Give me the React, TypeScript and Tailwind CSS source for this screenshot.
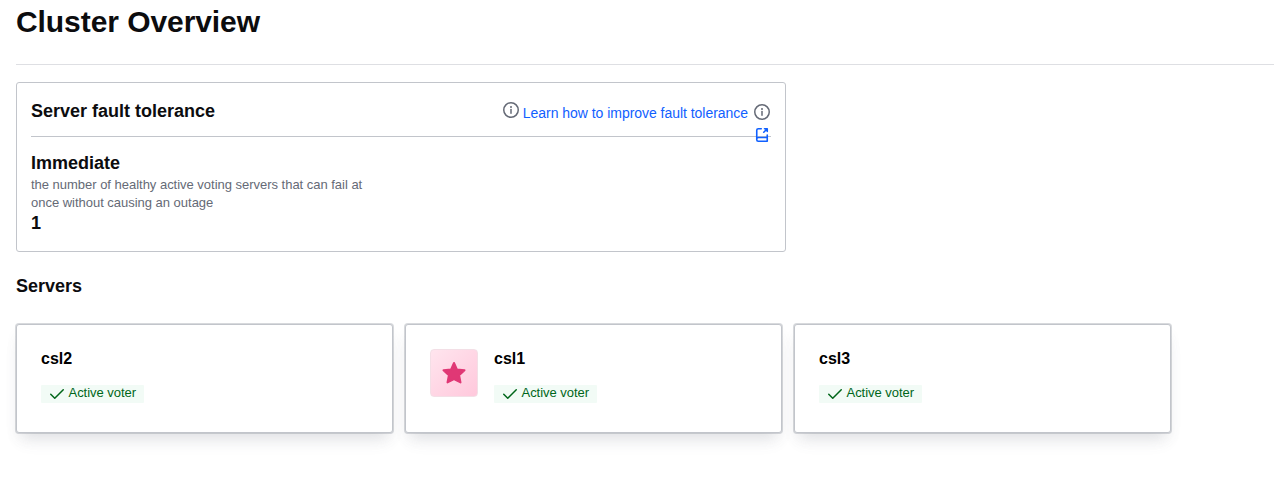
import React from "react";

function InfoIcon({ className = "" }: { className?: string }) {
  return (
    <svg viewBox="0 0 16 16" className={`size-4 shrink-0 text-[#656a76] ${className}`} fill="none">
      <circle cx="8" cy="8" r="7.25" stroke="currentColor" strokeWidth="1.5" />
      <path d="M8 7.6v3.6" stroke="currentColor" strokeWidth="1.5" strokeLinecap="round" />
      <circle cx="8" cy="5" r="1" fill="currentColor" />
    </svg>
  );
}

function DocsLinkIcon() {
  return (
    <svg viewBox="0 0 16 16" className="size-4 shrink-0 text-[#1060ff]" fill="none" stroke="currentColor" strokeWidth="1.6" strokeLinecap="round" strokeLinejoin="round">
      <path d="M7.25 1.75H4.25A1.5 1.5 0 0 0 2.75 3.25v9.5a1.5 1.5 0 0 0 1.5 1.5h9V8M2.75 12.4a1.75 1.75 0 0 1 1.75-1.9h8.75" />
      <path d="M10.5 1.75h2.75V4.5M13 2 9.75 5.25" />
    </svg>
  );
}

function ServerCard({ name, leader = false }: { name: string; leader?: boolean }) {
  return (
    <li className="flex h-[109px] gap-4 rounded-[3px] border border-[#c2c5cb] bg-white px-6 pt-6 shadow-[0_0_0_1px_#656a7640,0_8px_14px_-2px_#656a7612,0_12px_16px_-6px_#656a7624]">
      {leader && (
        <div className="flex size-12 shrink-0 items-center justify-center rounded-[4px] border border-[#f3dfe6] bg-linear-to-br from-[#ffe5ee] to-[#ffc8dc]">
          <svg viewBox="0 0 24 24" className="size-6" fill="#e03875" stroke="#e03875" strokeWidth="2" strokeLinejoin="round">
            <path d="M12 2l2.9 6.5 7.6.8-5.4 5 1.4 7.1L12 18.2l-6.5 3.2 1.4-7.1-5.4-5 7.6-.8z" />
          </svg>
        </div>
      )}
      <div>
        <h3 className="text-base leading-5 font-bold text-black">{name}</h3>
        <div className="mt-4 flex h-[18px] w-[103px] items-center gap-[3.5px] rounded-[1px] bg-[#f2fbf6] pl-2 text-[13px] leading-[18px] tracking-[-0.04px] text-[#006619]">
          <svg viewBox="0 0 16 16" className="-mt-[3px] size-4 shrink-0" fill="none" stroke="currentColor" strokeWidth="1.5" strokeLinecap="round" strokeLinejoin="round">
            <path d="M1.75 9.25l4 4 8.5-8.5" />
          </svg>
          <span className="-mt-[3px] whitespace-nowrap">Active voter</span>
        </div>
      </div>
    </li>
  );
}

export default function App() {
  return (
    <main className="h-[480px] overflow-hidden bg-white pl-4 font-['Liberation_Sans',sans-serif] text-[#0c0c0e]">
      <header className="h-[65px] border-b border-[#dedfe3]">
        <h1 className="pt-px text-[30px] leading-[42px] font-bold tracking-[-0.07px]">Cluster Overview</h1>
      </header>
      <section className="mt-[17px] h-[170px] w-[770px] rounded-[3px] border border-[#c2c5cb] px-[14px]">
        <div className="flex h-[54px] justify-between border-b border-[#c2c5cb]">
          <h2 className="pt-4 text-lg leading-6 font-bold">Server fault tolerance</h2>
          <div className="mr-px flex">
            <InfoIcon className="mt-[19px]" />
            <a href="#" className="mt-5 ml-1 text-[14px] leading-5 tracking-[-0.035px] whitespace-nowrap text-[#1060ff]">Learn how to improve fault tolerance</a>
            <div className="relative z-10 mt-[21px] ml-1.5 flex h-4 flex-col gap-[7px]">
              <InfoIcon />
              <DocsLinkIcon />
            </div>
          </div>
        </div>
        <h3 className="mt-[14px] text-lg leading-6 font-bold">Immediate</h3>
        <p className="w-[350px] pt-px text-[13px] leading-[18px] tracking-[-0.02px] text-[#656a76]">the number of healthy active voting servers that can fail at once without causing an outage</p>
        <p className="-mt-px text-lg leading-6 font-bold">1</p>
      </section>
      <h2 className="mt-[22px] text-lg leading-6 font-bold">Servers</h2>
      <ul className="mt-[26px] grid w-[1155px] grid-cols-3 gap-3">
        <ServerCard name="csl2" />
        <ServerCard name="csl1" leader />
        <ServerCard name="csl3" />
      </ul>
    </main>
  );
}
